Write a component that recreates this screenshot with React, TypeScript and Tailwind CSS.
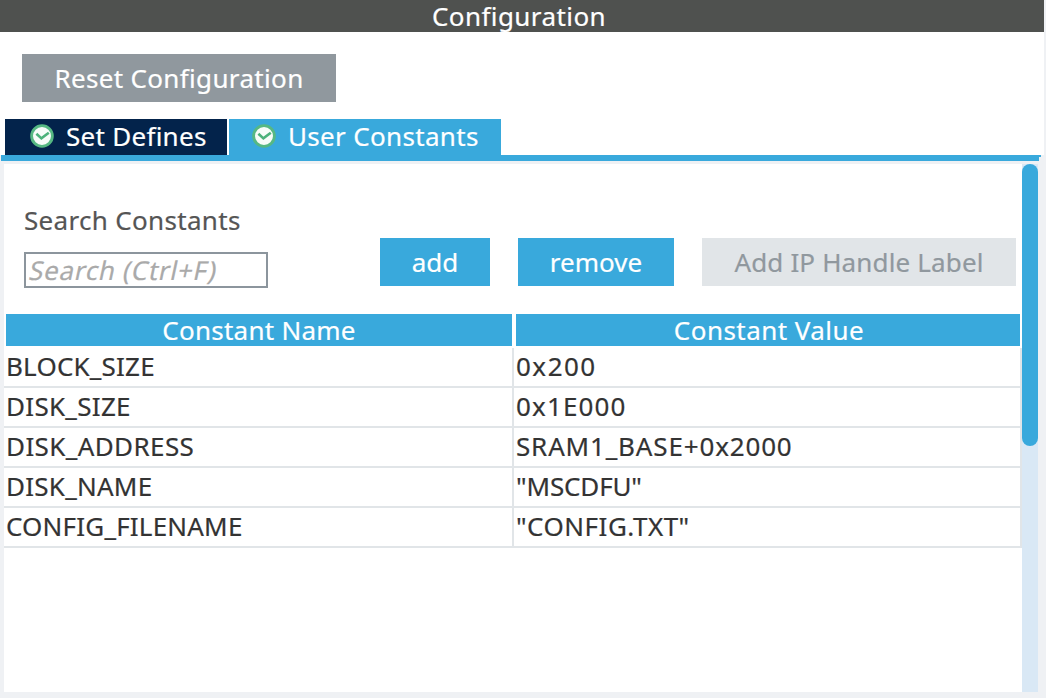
const rows = [
  { name: "BLOCK_SIZE", nameClass: "tracking-[0.2px]", value: "0x200", valueClass: "tracking-[1.5px]" },
  { name: "DISK_SIZE", nameClass: "tracking-[0.3px]", value: "0x1E000", valueClass: "tracking-[1.15px]" },
  { name: "DISK_ADDRESS", nameClass: "tracking-[0.4px]", value: "SRAM1_BASE+0x2000", valueClass: "tracking-[0.84px]" },
  { name: "DISK_NAME", nameClass: "tracking-[0.25px]", value: '"MSCDFU"', valueClass: "tracking-[-0.15px]" },
  { name: "CONFIG_FILENAME", nameClass: "tracking-[0.2px]", value: '"CONFIG.TXT"', valueClass: "tracking-[0.5px]" },
];

function StatusIcon() {
  return (
    <svg className="size-6 shrink-0" viewBox="0 0 24 24" fill="none">
      <circle cx="12" cy="12" r="10.4" fill="#f7fcf9" stroke="#56b883" strokeWidth="2.8" />
      <path d="M6.4 9.8l5 4.6 7.4-5.6" stroke="#4cb27b" strokeWidth="2.6" />
    </svg>
  );
}

export default function App() {
  return (
    <div className="flex h-[698px] w-[1046px] flex-col overflow-hidden bg-[#eff1f4] font-['Noto_Sans','Open_Sans',sans-serif] text-[26px] leading-8 whitespace-nowrap [-webkit-text-stroke:0.2px]">
      <header className="flex h-8 w-[1044px] items-center justify-center bg-[#4f514f] pr-1.5 tracking-[0.42px] text-white">Configuration</header>
      <div className="flex h-[123px] w-[1044px] flex-col justify-between bg-white pt-[22px]">
        <button className="ml-[22px] h-12 w-[314px] bg-[#90989e] tracking-[0.34px] text-white">Reset Configuration</button>
        <nav className="ml-[5px] flex h-9 gap-0.5 text-white">
          <button className="flex w-[222px] items-center gap-3 bg-[#03234b] pb-0.5 pl-[25px] tracking-[0.28px]">
            <StatusIcon />
            <span>Set Defines</span>
          </button>
          <button className="flex w-[272px] items-center gap-3 bg-[#39a9dc] pb-0.5 pl-[23px] tracking-[0.32px]">
            <StatusIcon />
            <span>User Constants</span>
          </button>
        </nav>
      </div>
      <div className="ml-px h-0.5 w-[1040px] bg-[#39a9dc]" />
      <div className="ml-px h-1 w-[1038px] bg-[#39a9dc]" />
      <main className="mt-[3px] ml-1 flex h-[528px] w-[1034px]">
        <section className="w-[1018px] bg-white">
          <div className="flex h-[150px] items-end pb-7 pl-5">
            <div className="-mb-0.5 w-[244px]">
              <label className="mb-4 block tracking-[0.32px] text-[#555]">Search Constants</label>
              <div className="flex h-9 items-center border-2 border-[#8c959d] pl-1 text-[#aaa]">
                <span className="inline-block -skew-x-12 tracking-[0.7px]">Search (Ctrl+F)</span>
              </div>
            </div>
            <button className="ml-28 h-12 w-[110px] bg-[#39a9dc] text-white">add</button>
            <button className="ml-7 h-12 w-[156px] bg-[#39a9dc] text-white">remove</button>
            <button className="ml-7 h-12 w-[314px] bg-[#e1e5e8] tracking-[0.15px] text-[#90989e]">Add IP Handle Label</button>
          </div>
          <div className="ml-0.5 flex h-8 gap-1 text-center text-white">
            <div className="w-[506px] bg-[#39a9dc] tracking-[0.25px]">Constant Name</div>
            <div className="w-[504px] bg-[#39a9dc] pl-0.5 tracking-[0.45px]">Constant Value</div>
          </div>
          <div className="mt-0.5 text-[#333]">
            {rows.map((r) => (
              <div key={r.name} className="flex h-10 border-b-2 border-[#e1e5e8]">
                <div className="w-[510px] border-r-2 border-[#e1e5e8] pt-0.5 pl-0.5">
                  <span className={r.nameClass}>{r.name}</span>
                </div>
                <div className="w-[508px] border-r-2 border-[#e1e5e8] pt-0.5 pl-0.5">
                  <span className={r.valueClass}>{r.value}</span>
                </div>
              </div>
            ))}
          </div>
        </section>
        <div className="w-4 bg-[#d9e8f5]">
          <div className="h-[282px] rounded-full bg-[#39a9dc]" />
        </div>
      </main>
    </div>
  );
}
